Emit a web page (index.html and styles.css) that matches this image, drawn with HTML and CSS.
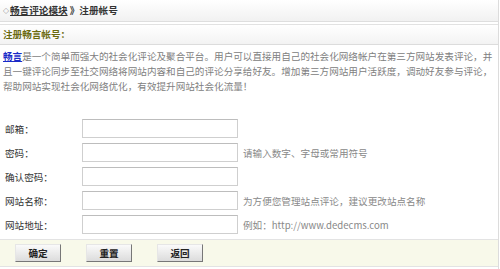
FILE: index.html
```html
<!DOCTYPE html>
<html lang="zh">
<head>
<meta charset="utf-8">
<link rel="stylesheet" href="styles.css">
</head>
<body>
<div class="page">
  <div class="crumb"><span class="bullet">◇</span><a class="crumb-link" href="#">畅言评论模块</a> 》注册帐号</div>
  <div class="title">注册畅言帐号：</div>
  <p class="desc"><a class="desc-link" href="#">畅言</a>是一个简单而强大的社会化评论及聚合平台。用户可以直接用自己的社会化网络帐户在第三方网站发表评论，并且一键评论同步至社交网络将网站内容和自己的评论分享给好友。增加第三方网站用户活跃度，调动好友参与评论，帮助网站实现社会化网络优化，有效提升网站社会化流量！</p>
  <form class="form">
    <div class="row"><label class="label">邮箱：</label><input class="field" type="text"></div>
    <div class="row"><label class="label">密码：</label><input class="field" type="password"><span class="hint">请输入数字、字母或常用符号</span></div>
    <div class="row"><label class="label">确认密码：</label><input class="field" type="password"></div>
    <div class="row"><label class="label">网站名称：</label><input class="field" type="text"><span class="hint">为方便您管理站点评论，建议更改站点名称</span></div>
    <div class="row"><label class="label">网站地址：</label><input class="field" type="text"><span class="hint">例如：http://www.dedecms.com</span></div>
    <div class="actions">
      <button class="btn" type="button">确定</button>
      <button class="btn" type="button">重置</button>
      <button class="btn" type="button">返回</button>
    </div>
  </form>
</div>
</body>
</html>
```
FILE: styles.css
```css
html, body {
  margin: 0;
  padding: 0;
  background: #fff;
}
body {
  font-family: "Noto Sans CJK SC", "Liberation Sans", sans-serif;
  font-size: 9.6px;
  color: #333;
}
.page {
  width: 499px;
  min-height: 269px;
  box-sizing: border-box;
  border-right: 1px solid #dcdcdc;
}
.crumb {
  height: 22px;
  line-height: 21px;
  box-sizing: border-box;
  padding-left: 3px;
  font-weight: bold;
  color: #333;
  background: linear-gradient(#ffffff, #f1f1f1);
  border-bottom: 1px solid #dedede;
}
.bullet {
  font-size: 6px;
  font-weight: normal;
  vertical-align: 1px;
  margin-right: 1px;
}
.crumb-link {
  color: #333;
  text-decoration: underline;
}
.title {
  margin-top: 2px;
  height: 21px;
  line-height: 19px;
  box-sizing: border-box;
  padding-left: 3px;
  font-weight: bold;
  color: #6b6b10;
  background: linear-gradient(#ffffff, #f3f3f3);
  border-top: 1px solid #e2e2e2;
  border-bottom: 1px solid #dcdcdc;
}
.desc {
  margin: 4px 0 0;
  padding: 0 2px 0 3px;
  line-height: 15px;
  color: #808080;
}
.desc-link {
  color: #1a2bc8;
  font-weight: bold;
  text-decoration: underline;
}
.form {
  margin: 25px 0 0;
}
.row {
  display: flex;
  align-items: center;
  height: 19px;
  margin-bottom: 5px;
}
.label {
  width: 82px;
  padding-left: 5px;
  box-sizing: border-box;
  color: #333;
}
.field {
  width: 156px;
  height: 19px;
  box-sizing: border-box;
  margin: 0;
  padding: 0 2px;
  border: 1px solid #cfcfcf;
  border-top-color: #bdbdbd;
  background: #fff;
  font: inherit;
}
.hint {
  margin-left: 5px;
  color: #888;
}
.actions {
  height: 28px;
  box-sizing: border-box;
  display: flex;
  align-items: center;
  gap: 25px;
  padding-left: 15px;
  background: #f8f9ea;
  border-top: 1px solid #e3e3e3;
  border-bottom: 1px solid #e3e3e3;
}
.btn {
  width: 46px;
  height: 18px;
  margin: 0;
  padding: 0;
  font: inherit;
  font-weight: bold;
  color: #222;
  background: linear-gradient(#fafafa, #dcdcdc);
  border: 1px solid #e6e6e6;
  border-right-color: #777;
  border-bottom-color: #777;
}
```
